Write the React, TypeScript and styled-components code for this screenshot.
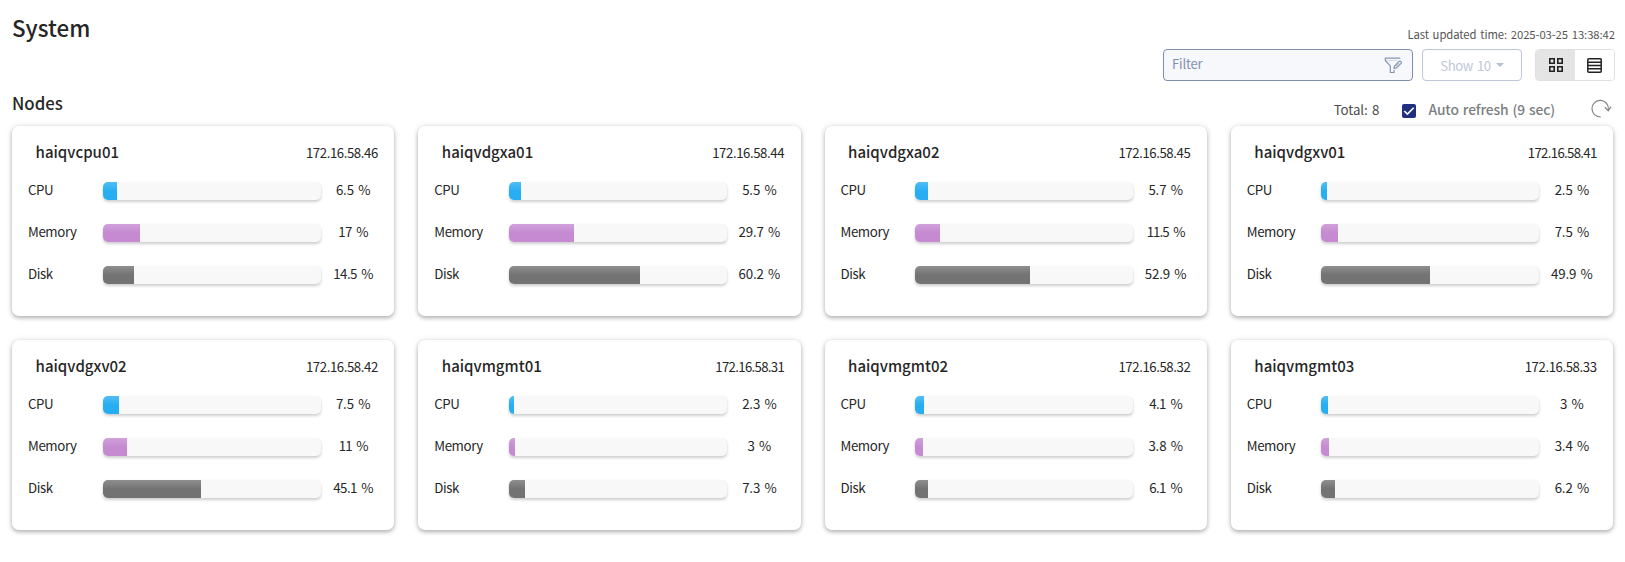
import React from "react";
import styled, { createGlobalStyle } from "styled-components";

const GlobalStyle = createGlobalStyle`
  * { box-sizing: border-box; }
  body {
    margin: 0;
    background: #fff;
    color: #262626;
    font-family: "Noto Sans CJK KR", "Noto Sans", sans-serif;
    font-size: 13px;
  }
`;

const Page = styled.main`
  min-height: 562px;
  padding: 12px 10px 0 12px;
`;

const Header = styled.header`
  display: flex;
  justify-content: space-between;
  height: 69px;
`;

const Title = styled.h1`
  margin: 0;
  font-size: 22.4px;
  font-weight: 500;
  line-height: 30px;
`;

const HeaderSide = styled.div`
  display: flex;
  flex-direction: column;
  align-items: flex-end;
  gap: 7px;
  padding-top: 14px;
`;

const Updated = styled.div`
  font-size: 11.3px;
  line-height: 16px;
  letter-spacing: -0.08px;
  word-spacing: 1.3px;
  color: #555;
`;

const Controls = styled.div`
  display: flex;
`;

const FilterBox = styled.div`
  display: flex;
  justify-content: space-between;
  width: 250px;
  height: 32px;
  padding: 7px 9px 0 8px;
  border: 1px solid #7e8fae;
  border-radius: 4px;
  background: #f6f8fc;
  color: #8390ac;
  font-size: 13.2px;
  line-height: 13px;
  letter-spacing: -0.25px;
`;

const ShowButton = styled.button`
  display: flex;
  justify-content: center;
  gap: 5px;
  width: 100px;
  height: 32px;
  margin: 0 13px 0 9px;
  padding: 9px 0 0;
  border: 1px solid #bcc5d9;
  border-radius: 4px;
  background: #fff;
  color: #bfc7da;
  font: 400 13.2px/14px "Noto Sans CJK KR", "Noto Sans", sans-serif;
  letter-spacing: -0.5px;
  word-spacing: 1.8px;
`;

const Caret = styled.span`
  margin-top: 4px;
  width: 0;
  height: 0;
  border: 4px solid transparent;
  border-top-color: #b4bed4;
  border-bottom: 0;
`;

const Toggle = styled.div`
  display: flex;
  width: 80px;
  height: 32px;
  border: 1px solid #e0e0e0;
  border-radius: 4px;
  overflow: hidden;
`;

const ToggleItem = styled.div<{ $active?: boolean }>`
  display: flex;
  flex: 1;
  align-items: center;
  justify-content: center;
  background: ${(p) => (p.$active ? "#e4e4e4" : "#fff")};
`;

const SectionBar = styled.div`
  display: flex;
  justify-content: space-between;
  height: 45px;
  padding-top: 11px;
`;

const SectionTitle = styled.h2`
  margin: 0;
  font-size: 16.8px;
  font-weight: 500;
  line-height: 23px;
`;

const Status = styled.div`
  display: flex;
  align-items: flex-start;
  padding: 7px 3px 0 0;
  line-height: 21px;
`;

const Total = styled.span`
  margin-right: 22.5px;
  color: #4c4c4c;
  font-size: 13.3px;
  letter-spacing: -0.1px;
  word-spacing: 1.5px;
`;

const Check = styled.span`
  display: flex;
  width: 14px;
  height: 14px;
  margin-top: 5px;
  border-radius: 2px;
  background: #20307f;
`;

const AutoLabel = styled.span`
  margin: 0 36px 0 12.8px;
  color: #7b7f82;
  font-size: 13.8px;
  font-weight: 500;
  letter-spacing: -0.12px;
  word-spacing: 1px;
`;

const NodeGrid = styled.section`
  display: grid;
  grid-template-columns: repeat(4, 1fr);
  gap: 24px;
  padding-right: 2px;
`;

const Card = styled.article`
  height: 190px;
  padding: 14px 8.65px 0 16px;
  border-radius: 7px;
  background: #fff;
  box-shadow: 0 2px 4px rgba(0, 0, 0, 0.28), 0 0 7px rgba(0, 0, 0, 0.09);
`;

const CardHead = styled.div`
  display: flex;
  justify-content: space-between;
  height: 24px;
  margin-bottom: 18px;
  padding: 0 7.8px 0 7.6px;
  line-height: 24px;
`;

const NodeName = styled.span`
  font-size: 15px;
  font-weight: 500;
`;

/* Narrow "1" digits tighten the tracking of the figures they appear in. */
const Address = styled.span<{ $ones: number }>`
  margin-top: 1px;
  font-size: 13.2px;
  letter-spacing: ${(p) => -0.42 - (p.$ones - 2) * 0.26}px;
`;

const Metric = styled.div`
  display: grid;
  grid-template-columns: 74.6px 1fr 65px;
  height: 18px;
  margin-bottom: 24px;
  line-height: 16px;
`;

const MetricName = styled.span`
  font-size: 13.3px;
  letter-spacing: -0.4px;
`;

const Track = styled.div`
  height: 18px;
  overflow: hidden;
  border-radius: 5px;
  background: #f8f8f8;
  box-shadow: 0 2px 3px rgba(0, 0, 0, 0.19), 0 0 2px rgba(0, 0, 0, 0.04);
`;

const Fill = styled.div<{ $color: string }>`
  height: 100%;
  background: linear-gradient(rgba(255, 255, 255, 0.2), rgba(255, 255, 255, 0) 50%) ${(p) => p.$color};
`;

const Value = styled.span<{ $ones: number }>`
  text-align: center;
  font-size: 13.3px;
  letter-spacing: ${(p) => -0.15 - p.$ones * 0.4}px;
  word-spacing: ${(p) => 1.5 + p.$ones * 0.5}px;
`;

const metrics = [
  { name: "CPU", color: "#27aef2" },
  { name: "Memory", color: "#c58ad1" },
  { name: "Disk", color: "#737373" },
];

const nodes = [
  { name: "haiqvcpu01", ip: "172.16.58.46", usage: [6.5, 17, 14.5] },
  { name: "haiqvdgxa01", ip: "172.16.58.44", usage: [5.5, 29.7, 60.2] },
  { name: "haiqvdgxa02", ip: "172.16.58.45", usage: [5.7, 11.5, 52.9] },
  { name: "haiqvdgxv01", ip: "172.16.58.41", usage: [2.5, 7.5, 49.9] },
  { name: "haiqvdgxv02", ip: "172.16.58.42", usage: [7.5, 11, 45.1] },
  { name: "haiqvmgmt01", ip: "172.16.58.31", usage: [2.3, 3, 7.3] },
  { name: "haiqvmgmt02", ip: "172.16.58.32", usage: [4.1, 3.8, 6.1] },
  { name: "haiqvmgmt03", ip: "172.16.58.33", usage: [3, 3.4, 6.2] },
];

const countOnes = (text: string | number) => String(text).split("1").length - 1;

const FilterIcon = () => (
  <svg width="19" height="17" viewBox="0 0 19 17" fill="none" stroke="#8795b0" strokeWidth="1.2" strokeLinejoin="round" strokeLinecap="round">
    <path d="M15.8 1.2H1.3v2.3l5 5.3v6.7h3.8v-2.2" />
    <path d="M2 3.4h11.5" strokeWidth=".6" opacity=".5" />
    <path d="M9.9 11.4l.8-2.6 4.4-4.4q1.1-.7 1.9.2t.1 1.8l-4.6 4.4z" />
    <path d="M12.4 8.9l2.6-2.6" strokeWidth=".8" />
  </svg>
);

const GridIcon = () => (
  <svg width="14" height="14" viewBox="0 0 14 14" fill="none" stroke="#222" strokeWidth="1.6">
    <path d="M.8.8h4.4v4.4H.8zM8.8.8h4.4v4.4H8.8zM.8 8.8h4.4v4.4H.8zM8.8 8.8h4.4v4.4H8.8z" />
  </svg>
);

const RowsIcon = () => (
  <svg width="15" height="15" viewBox="0 0 15 15" fill="none" stroke="#222" strokeWidth="1.5">
    <rect x=".8" y=".8" width="13.4" height="13.4" rx="1" />
    <path d="M1 4.2h13M1 7.5h13M1 10.8h13" />
  </svg>
);

const CheckIcon = () => (
  <svg width="14" height="14" viewBox="0 0 14 14" fill="none" stroke="#fff" strokeWidth="1.6">
    <path d="M2.3 7l3.1 3.1L11.7 3.8" />
  </svg>
);

const RefreshIcon = () => (
  <svg width="21" height="19" viewBox="0 0 21 19" fill="none" stroke="#858585" strokeWidth="1.2">
    <path d="M9.7 17.8A8.2 8.2 0 1 1 17.3 10.8" />
    <path d="M13.8 8.3l3.5 3.4 2.7-4" />
  </svg>
);

export default function App() {
  return (
    <Page>
      <GlobalStyle />
      <Header>
        <Title>System</Title>
        <HeaderSide>
          <Updated>Last updated time: 2025-03-25 13:38:42</Updated>
          <Controls>
            <FilterBox>
              <span>Filter</span>
              <FilterIcon />
            </FilterBox>
            <ShowButton>
              Show 10
              <Caret />
            </ShowButton>
            <Toggle>
              <ToggleItem $active>
                <GridIcon />
              </ToggleItem>
              <ToggleItem>
                <RowsIcon />
              </ToggleItem>
            </Toggle>
          </Controls>
        </HeaderSide>
      </Header>
      <SectionBar>
        <SectionTitle>Nodes</SectionTitle>
        <Status>
          <Total>Total: 8</Total>
          <Check>
            <CheckIcon />
          </Check>
          <AutoLabel>Auto refresh (9 sec)</AutoLabel>
          <RefreshIcon />
        </Status>
      </SectionBar>
      <NodeGrid>
        {nodes.map((node) => (
          <Card key={node.name}>
            <CardHead>
              <NodeName>{node.name}</NodeName>
              <Address $ones={countOnes(node.ip)}>{node.ip}</Address>
            </CardHead>
            {metrics.map((metric, i) => (
              <Metric key={metric.name}>
                <MetricName>{metric.name}</MetricName>
                <Track>
                  <Fill $color={metric.color} style={{ width: `${node.usage[i]}%` }} />
                </Track>
                <Value $ones={countOnes(node.usage[i])}>{node.usage[i]} %</Value>
              </Metric>
            ))}
          </Card>
        ))}
      </NodeGrid>
    </Page>
  );
}
